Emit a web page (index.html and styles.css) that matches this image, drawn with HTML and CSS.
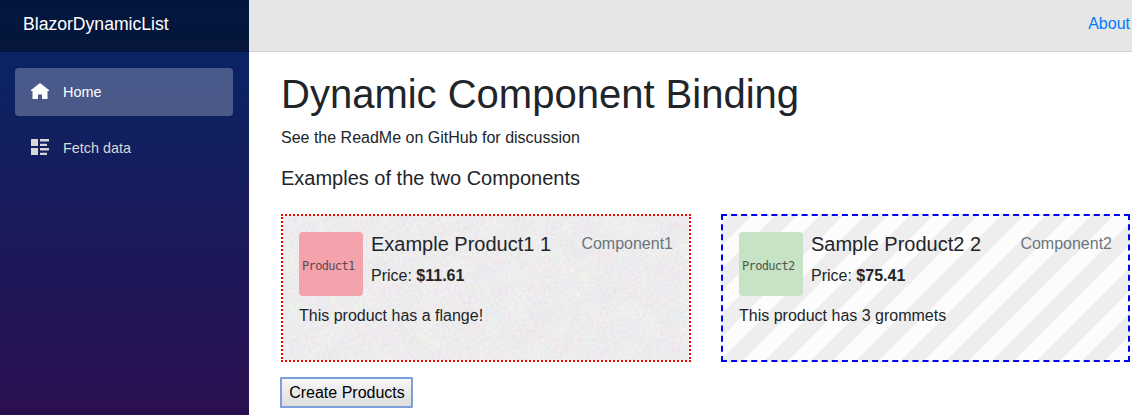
FILE: index.html
```html
<!DOCTYPE html>
<html lang="en">
<head>
<meta charset="utf-8">
<title>BlazorDynamicList</title>
<link rel="stylesheet" href="styles.css">
</head>
<body>
<div class="app">
  <aside class="sidebar">
    <div class="brand-row"><a class="brand">BlazorDynamicList</a></div>
    <nav class="nav">
      <a class="nav-link active">
        <svg class="icon" viewBox="0 0 18 18"><path d="M9 0 0 7v1h1.500v8H7v-4.500h4V16h5.500V8H18V7z"/></svg>
        <span>Home</span>
      </a>
      <a class="nav-link">
        <svg class="icon" viewBox="0 0 18 18"><path d="M0 0h7v7H0zM9 0h9v2.500H9zM9 4.800h7V7H9zM0 9h7v7H0zM9 9h9v2.500H9zM9 13.800h7V16H9z"/></svg>
        <span>Fetch data</span>
      </a>
    </nav>
  </aside>
  <main class="main">
    <header class="top-row"><a class="about">About</a></header>
    <div class="content">
      <h1>Dynamic Component Binding</h1>
      <p class="intro">See the ReadMe on GitHub for discussion</p>
      <h5 class="section-title">Examples of the two Components</h5>
      <div class="cards">
        <article class="card card-one">
          <svg class="texture" width="100%" height="100%">
            <filter id="paper" x="0" y="0" width="100%" height="100%" color-interpolation-filters="sRGB">
              <feTurbulence type="fractalNoise" baseFrequency=".045" numOctaves="2" seed="4"/>
              <feColorMatrix values="1 0 0 0 0  0 1 0 0 0  0 0 1 0 0  0 0 0 0 1" result="patches"/>
              <feTurbulence type="fractalNoise" baseFrequency=".35" numOctaves="3" seed="9"/>
              <feColorMatrix values="1 0 0 0 0  0 1 0 0 0  0 0 1 0 0  0 0 0 0 1" result="grain"/>
              <feComposite in="patches" in2="grain" operator="arithmetic" k2=".3" k3=".7"/>
              <feColorMatrix values=".14 0 0 0 .86  0 .14 0 0 .855  0 0 .14 0 .86  0 0 0 0 1"/>
            </filter>
            <rect width="100%" height="100%" filter="url(#paper)"/>
          </svg>
          <div class="card-head">
            <div class="thumb">Product1</div>
            <div class="info"><h5>Example Product1 1</h5><div>Price: <b>$11.61</b></div></div>
            <span class="kind">Component1</span>
          </div>
          <p class="description">This product has a flange!</p>
        </article>
        <article class="card card-two">
          <div class="card-head">
            <div class="thumb">Product2</div>
            <div class="info"><h5>Sample Product2 2</h5><div>Price: <b>$75.41</b></div></div>
            <span class="kind">Component2</span>
          </div>
          <p class="description">This product has 3 grommets</p>
        </article>
      </div>
      <button class="create">Create Products</button>
    </div>
  </main>
</div>
</body>
</html>
```
FILE: styles.css
```css
* { box-sizing: border-box; }
body {
  margin: 0;
  overflow: hidden;
  font: 16px/24px "Liberation Sans", Arial, sans-serif;
  color: #212529;
  background: #fff;
}
.app { display: flex; height: 415px; }
.sidebar {
  flex: 0 0 249px;
  background: linear-gradient(180deg, #052767 0, #3a0647 580px);
}
.brand-row {
  height: 52px;
  padding: 9px 23px;
  background: rgba(0, 0, 0, .4);
}
.brand { color: #fff; font-size: 17.6px; line-height: 30px; }
.nav { padding: 16px; padding-left: 15px; display: grid; gap: 8px; }
.nav-link {
  height: 48px;
  padding-left: 16px;
  display: flex;
  align-items: center;
  gap: 14px;
  border-radius: 4px;
  color: #d7d7d7;
  font-size: 14.4px;
}
.nav-link.active { color: #fff; background: rgba(255, 255, 255, .25); }
.icon { width: 18px; height: 18px; fill: currentColor; }
.main { flex: 1; min-width: 0; }
.top-row {
  height: 52px;
  padding: 12px 2px;
  text-align: right;
  background: #e6e6e6;
  border-bottom: 1px solid #d1d1d1;
}
.about { color: #007bff; }
.content { padding: 18px 2px 0 32px; }
h1, h5, p { margin: 0; font-weight: 400; }
h1 { font-size: 40px; line-height: 48px; margin-bottom: 8px; }
.section-title { margin: 16px 0 24px; }
h5 { font-size: 20px; line-height: 24px; }
.cards { display: grid; grid-template-columns: 410px 409px; gap: 30px; }
.card { position: relative; height: 148px; padding: 16px; overflow: hidden; }
.card-one { border: 2px dotted #f00; }
.card-two {
  border: 2px dashed #00f;
  background: repeating-linear-gradient(-45deg, #fcfcfc 0 16px, #eee 16px 32px);
}
.texture { position: absolute; inset: 0; z-index: -1; }
.card-head { display: flex; gap: 8px; }
.thumb {
  width: 64px;
  height: 64px;
  padding-left: 3px;
  border-radius: 4px;
  background: #f4a3ac;
  color: #62474c;
  font: 12px/68px "DejaVu Sans Mono", monospace;
  letter-spacing: -.65px;
}
.card-two .thumb { background: #c7e2c5; color: #4c594b; }
.info { flex: 1; }
.info h5 { margin-bottom: 8px; }
.kind { color: #6c757d; }
.description { margin-top: 8px; }
.create {
  display: block;
  width: 133px;
  height: 31px;
  margin: 15px 0 0 -1px;
  padding: 0 0 0 1px;
  border: 2px solid #7a9fdb;
  border-radius: 1px;
  background: linear-gradient(#f6f6f6, #dedede);
  color: #000;
  font: inherit;
}
```
